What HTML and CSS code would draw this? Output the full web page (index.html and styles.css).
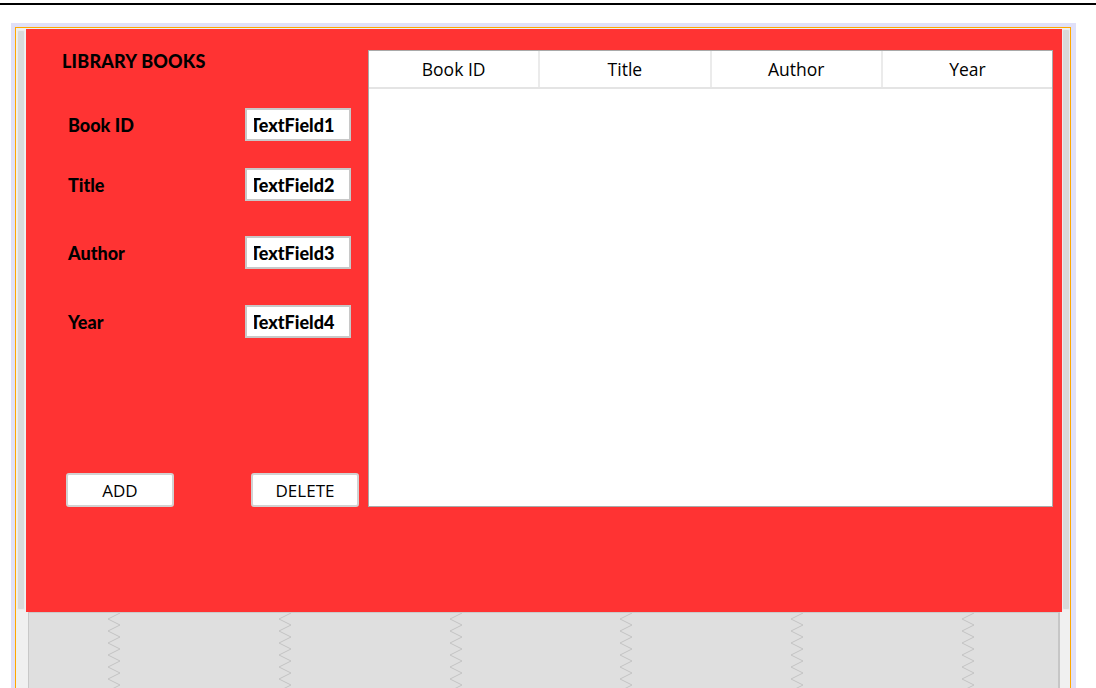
FILE: index.html
```html
<!DOCTYPE html>
<html>
<head>
<meta charset="utf-8">
<link rel="stylesheet" href="styles.css">
</head>
<body>
<div class="topline"></div>
<div class="designer">
  <div class="frame">
    <div class="main">
      <div class="lscroll"><div class="thumb"></div></div>
      <div class="panel">
        <div class="left">
          <div class="title">LIBRARY BOOKS</div>
          <div class="form">
            <div class="row"><span class="label">Book ID</span><div class="field"><div class="clip"><span>TextField1</span></div></div></div>
            <div class="row"><span class="label">Title</span><div class="field"><div class="clip"><span>TextField2</span></div></div></div>
            <div class="row"><span class="label">Author</span><div class="field"><div class="clip"><span>TextField3</span></div></div></div>
            <div class="row"><span class="label">Year</span><div class="field"><div class="clip"><span>TextField4</span></div></div></div>
          </div>
          <div class="buttons">
            <button class="btn">ADD</button>
            <button class="btn">DELETE</button>
          </div>
        </div>
        <div class="table">
          <div class="thead">
            <div class="th">Book ID</div>
            <div class="th">Title</div>
            <div class="th">Author</div>
            <div class="th">Year</div>
          </div>
        </div>
      </div>
      <div class="rscroll"><div class="thumb"></div></div>
    </div>
    <div class="bottom">
      <div class="bstrip-l"></div>
      <div class="grayarea">
        <svg class="zig" viewBox="0 0 14 76" width="14" height="76"><polyline points="13,0 1,6 13,12 1,18 13,24 1,30 13,36 1,42 13,48 1,54 13,60 1,66 13,72 1,78"/></svg>
        <svg class="zig" viewBox="0 0 14 76" width="14" height="76"><polyline points="13,0 1,6 13,12 1,18 13,24 1,30 13,36 1,42 13,48 1,54 13,60 1,66 13,72 1,78"/></svg>
        <svg class="zig" viewBox="0 0 14 76" width="14" height="76"><polyline points="13,0 1,6 13,12 1,18 13,24 1,30 13,36 1,42 13,48 1,54 13,60 1,66 13,72 1,78"/></svg>
        <svg class="zig" viewBox="0 0 14 76" width="14" height="76"><polyline points="13,0 1,6 13,12 1,18 13,24 1,30 13,36 1,42 13,48 1,54 13,60 1,66 13,72 1,78"/></svg>
        <svg class="zig" viewBox="0 0 14 76" width="14" height="76"><polyline points="13,0 1,6 13,12 1,18 13,24 1,30 13,36 1,42 13,48 1,54 13,60 1,66 13,72 1,78"/></svg>
        <svg class="zig" viewBox="0 0 14 76" width="14" height="76"><polyline points="13,0 1,6 13,12 1,18 13,24 1,30 13,36 1,42 13,48 1,54 13,60 1,66 13,72 1,78"/></svg>
      </div>
      <div class="bstrip-r"></div>
    </div>
  </div>
</div>
</body>
</html>
```

FILE: styles.css
```css
html, body {
  margin: 0;
  padding: 0;
  background: #ffffff;
  height: 100%;
  overflow: hidden;
}

.topline {
  height: 2px;
  margin-top: 3px;
  background: #000000;
}

.designer {
  margin: 18px 0 0 11px;
  width: 1056px;
  height: 661px;
  border-style: solid;
  border-color: #e0e0f8;
  border-width: 4px 5px 0 4px;
}

.frame {
  height: 100%;
  box-sizing: border-box;
  border: 1px solid #ffa800;
  border-bottom: none;
  background: #f0f0f0;
}

.main {
  display: flex;
  padding-top: 1px;
}

.lscroll {
  width: 10px;
  flex: none;
}
.lscroll .thumb {
  margin: 1px 0 0 1px;
  width: 8px;
  height: 580px;
  box-sizing: border-box;
  background: #d9d9d9;
  border: 1px solid #ececec;
  border-radius: 2px;
}

.rscroll {
  width: 8px;
  flex: none;
}
.rscroll .thumb {
  width: 8px;
  height: 581px;
  box-sizing: border-box;
  background: #d9d9d9;
  border: 1px solid #ececec;
  border-radius: 2px;
}

.panel {
  width: 1036px;
  height: 583px;
  flex: none;
  background: #ff3333;
  display: flex;
  align-items: flex-start;
}

.left {
  width: 342px;
  flex: none;
  display: flex;
  flex-direction: column;
}

.title {
  margin: 21px 0 0 36px;
  font-family: "Lato", "DejaVu Sans", sans-serif;
  font-weight: 900;
  font-size: 18px;
  line-height: 22px;
  color: #000;
  letter-spacing: 0.2px;
}

.form {
  margin-top: 36px;
  display: flex;
  flex-direction: column;
}

.row {
  display: flex;
  align-items: center;
  height: 33px;
}
.row:nth-child(2) { margin-top: 27px; }
.row:nth-child(3) { margin-top: 35px; }
.row:nth-child(4) { margin-top: 36px; }

.label {
  margin-left: 42px;
  width: 177px;
  font-family: "Lato", "DejaVu Sans", sans-serif;
  font-weight: 900;
  font-size: 18px;
  color: #000;
}

.field {
  width: 106px;
  height: 33px;
  box-sizing: border-box;
  border: 2px solid #c8c8c8;
  background: #fff;
  padding-left: 7px;
  display: flex;
  align-items: center;
}
.field .clip {
  overflow: hidden;
  white-space: nowrap;
  width: 90px;
}
.field .clip span {
  display: inline-block;
  margin-left: -4px;
  font-family: "Lato", "DejaVu Sans", sans-serif;
  font-weight: 900;
  font-size: 18px;
  color: #000;
}

.buttons {
  display: flex;
  margin-top: 135px;
  padding-left: 40px;
  gap: 77px;
}

.btn {
  width: 108px;
  height: 34px;
  box-sizing: border-box;
  background: #ffffff;
  border: 2px solid #d2d2d2;
  border-radius: 3px;
  font-family: "Open Sans", "Noto Sans", sans-serif;
  font-size: 17px;
  color: #000;
  padding: 0;
}

.table {
  margin-top: 21px;
  width: 685px;
  height: 457px;
  box-sizing: border-box;
  border: 1px solid #a9a9a9;
  background: #ffffff;
}

.thead {
  display: flex;
  height: 38px;
  box-sizing: border-box;
  border-bottom: 2px solid #e4e4e4;
}

.th {
  flex: 1;
  display: flex;
  align-items: center;
  justify-content: center;
  font-family: "Open Sans", "Noto Sans", sans-serif;
  font-size: 17.5px;
  color: #000;
  border-right: 2px solid #ebebeb;
}
.th:last-child {
  border-right: none;
}

.bottom {
  display: flex;
  height: 76px;
}
.bstrip-l {
  width: 12px;
  flex: none;
}
.bstrip-r {
  width: 10px;
  flex: none;
}
.grayarea {
  width: 1032px;
  flex: none;
  box-sizing: border-box;
  background: #dfdfdf;
  border-left: 1px solid #c8c8c8;
  border-right: 2px solid #c6c6c6;
  border-top: 1px solid #cacaca;
  display: flex;
  gap: 156.8px;
  padding-left: 78px;
  overflow: hidden;
}
.zig {
  flex: none;
  display: block;
}
.zig polyline {
  fill: none;
  stroke: #c4c4c4;
  stroke-width: 1;
}
```
